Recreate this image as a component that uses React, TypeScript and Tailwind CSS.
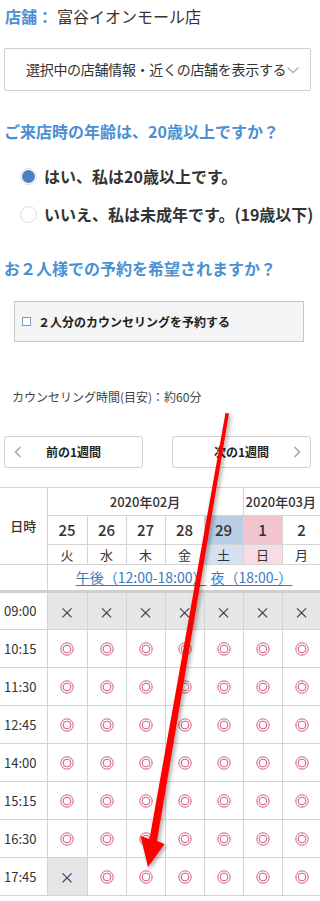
import React from 'react';

const days = [
  { d: '25', w: '火', kind: '' },
  { d: '26', w: '水', kind: '' },
  { d: '27', w: '木', kind: '' },
  { d: '28', w: '金', kind: '' },
  { d: '29', w: '土', kind: 'sat' },
  { d: '1', w: '日', kind: 'sun' },
  { d: '2', w: '月', kind: '' },
];

const times = ['09:00', '10:15', '11:30', '12:45', '14:00', '15:15', '16:30', '17:45'];

function slot(t: string, i: number) {
  if (t === '09:00') return false;
  if (t === '17:45' && i === 0) return false;
  return true;
}

function Mark({ ok }: { ok: boolean }) {
  if (!ok) return <span className="text-[15px] text-[#333]">×</span>;
  return (
    <svg width="14" height="14" viewBox="0 0 14 14" className="mx-auto block">
      <circle cx="7" cy="7" r="6.2" fill="none" stroke="#d25a7c" strokeWidth="1" />
      <circle cx="7" cy="7" r="3.9" fill="none" stroke="#d25a7c" strokeWidth="1" />
    </svg>
  );
}

export default function App() {
  const cell = 'border border-[#d4d4d4] text-center';
  return (
    <div className="relative w-[320px] overflow-hidden bg-white text-[#333] font-['Noto_Sans_CJK_JP',sans-serif]">
      <div className="px-[5px] pt-[4px] h-[28px] text-[16px] leading-[24px] whitespace-nowrap">
        <span className="font-bold text-[#4a90d2]">店舗：</span>
        <span className="ml-[4px]">富谷イオンモール店</span>
      </div>

      <div className="mx-[4px] mt-[20px] w-[307px] h-[43px] border border-[#cfcfcf] rounded-[2px] flex items-center pl-[21px] pr-[6px]">
        <span className="text-[14px] whitespace-nowrap tracking-[-0.3px]">選択中の店舗情報・近くの店舗を表示する</span>
        <svg width="14" height="10" viewBox="0 0 14 10" className="shrink-0">
          <path d="M1.5 2.5 L7 7.5 L12.5 2.5" fill="none" stroke="#b5b5b5" strokeWidth="1.6" />
        </svg>
      </div>

      <div className="px-[4px] mt-[29px] text-[16px] font-bold text-[#4a90d2] leading-[22px] whitespace-nowrap">
        ご来店時の年齢は、20歳以上ですか？
      </div>

      <div className="mt-[23px] pl-[20px] flex items-center gap-[7px] h-[22px] whitespace-nowrap">
        <span className="w-[17px] h-[17px] rounded-full border border-[#dcdcdc] flex items-center justify-center shrink-0">
          <span className="w-[13px] h-[13px] rounded-full bg-[#4a80bf]" />
        </span>
        <span className="text-[16px] font-bold">はい、私は20歳以上です。</span>
      </div>
      <div className="mt-[16px] pl-[20px] flex items-center gap-[7px] h-[22px] whitespace-nowrap">
        <span className="w-[17px] h-[17px] rounded-full border border-[#dcdcdc] shrink-0" />
        <span className="text-[16px] font-bold">いいえ、私は未成年です。(19歳以下)</span>
      </div>

      <div className="px-[4px] mt-[32px] text-[16px] font-bold text-[#4a90d2] leading-[22px] whitespace-nowrap">
        お２人様での予約を希望されますか？
      </div>

      <div className="ml-[14px] mt-[22px] w-[290px] h-[41px] bg-[#f4f4f4] border border-[#c6c6c6] flex items-center pl-[7px] gap-[7px]">
        <span className="w-[9px] h-[9px] border border-[#7a9cc4] bg-white" />
        <span className="text-[12px] font-bold text-[#222]">２人分のカウンセリングを予約する</span>
      </div>

      <div className="px-[12px] mt-[46px] text-[12px] text-[#444] leading-[18px]">
        カウンセリング時間(目安)：約60分
      </div>

      <div className="mt-[30px] px-[4px] flex justify-between w-[315px]">
        <div className="w-[139px] h-[32px] border border-[#cfcfcf] rounded-[3px] flex items-center px-[9px]">
          <svg width="8" height="12" viewBox="0 0 8 12"><path d="M6.5 1 L1.5 6 L6.5 11" fill="none" stroke="#aaa" strokeWidth="1.6" /></svg>
          <span className="flex-1 text-center text-[12px] font-bold text-[#222] pr-[8px]">前の1週間</span>
        </div>
        <div className="w-[139px] h-[32px] border border-[#cfcfcf] rounded-[3px] flex items-center px-[9px]">
          <span className="flex-1 text-center text-[12px] font-bold text-[#222] pl-[8px]">次の1週間</span>
          <svg width="8" height="12" viewBox="0 0 8 12"><path d="M1.5 1 L6.5 6 L1.5 11" fill="none" stroke="#aaa" strokeWidth="1.6" /></svg>
        </div>
      </div>

      <table className="mt-[19px] w-[321px] table-fixed border-collapse">
        <colgroup>
          <col className="w-[47px]" />
          <col className="w-[40px]" />
          <col className="w-[39px]" />
          <col className="w-[39px]" />
          <col className="w-[39px]" />
          <col className="w-[39px]" />
          <col className="w-[39px]" />
          <col className="w-[39px]" />
        </colgroup>
        <thead>
          <tr className="h-[28px]">
            <th rowSpan={3} className={`${cell} border-l-0 text-[13px] font-medium`}>日時</th>
            <th colSpan={5} className={`${cell} text-[13px] font-medium`}>2020年02月</th>
            <th colSpan={2} className={`${cell} text-[13px] font-medium whitespace-nowrap text-left pl-[2px]`}>2020年03月</th>
          </tr>
          <tr className="h-[29px]">
            {days.map((x) => (
              <th
                key={x.d}
                className={`${cell} text-[15px] font-medium ${x.kind === 'sat' ? 'bg-[#b9cde5]' : x.kind === 'sun' ? 'bg-[#f2c4cd]' : ''}`}
              >
                {x.d}
              </th>
            ))}
          </tr>
          <tr className="h-[20px]">
            {days.map((x) => (
              <th
                key={x.w}
                className={`${cell} text-[13px] font-normal leading-[18px] ${x.kind === 'sat' ? 'bg-[#d3e1f1]' : x.kind === 'sun' ? 'bg-[#f7dce5]' : ''}`}
              >
                {x.w}
              </th>
            ))}
          </tr>
          <tr className="h-[27px]">
            <th className={`${cell} border-l-0 border-b-[3px] border-b-[#d0d0d0]`} />
            <th colSpan={7} className={`${cell} border-b-[3px] border-b-[#d0d0d0] text-[14px] font-normal whitespace-nowrap`}>
              <span className="text-[#3a7cc3] underline underline-offset-2">午後（12:00-18:00）</span>
              <span className="text-[#3a7cc3] underline underline-offset-2 ml-[4px]">夜（18:00-）</span>
            </th>
          </tr>
        </thead>
        <tbody>
          {times.map((t) => (
            <tr key={t} className="h-[38px]">
              <td className={`${cell} border-l-0 text-[13px] text-left pl-[4px]`}>{t}</td>
              {days.map((x, i) => {
                const ok = slot(t, i);
                return (
                  <td key={x.d} className={`${cell} ${ok ? '' : 'bg-[#e6e6e6]'}`}>
                    <Mark ok={ok} />
                  </td>
                );
              })}
            </tr>
          ))}
        </tbody>
      </table>

      <svg width="320" height="901" viewBox="0 0 320 901" className="absolute left-0 top-0 pointer-events-none">
        <defs>
          <filter id="sh" x="-20%" y="-5%" width="140%" height="110%">
            <feDropShadow dx="2" dy="2" stdDeviation="2" floodColor="#000" floodOpacity="0.35" />
          </filter>
        </defs>
        <polygon
          points="225.5,413 229,413.5 157,841 164.5,844 148,867 140.5,836 149.5,839"
          fill="#ff0000"
          filter="url(#sh)"
        />
      </svg>
    </div>
  );
}
